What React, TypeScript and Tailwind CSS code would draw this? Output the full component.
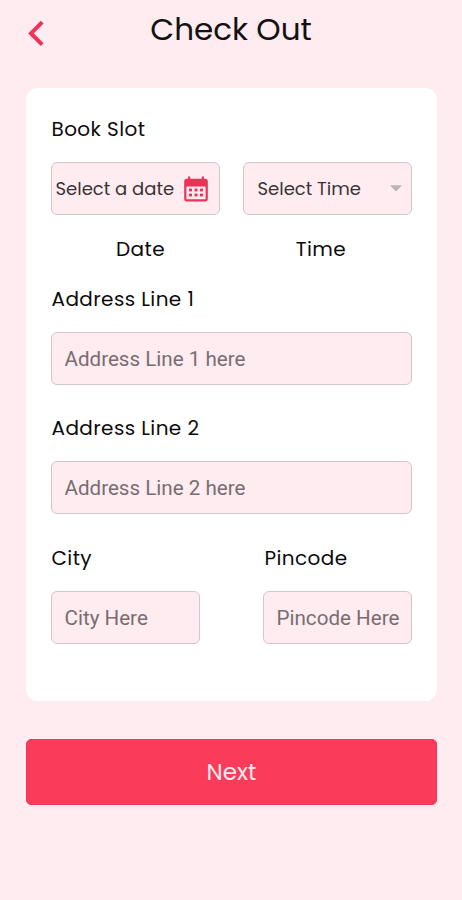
import type { ReactNode } from "react";
import { clsx } from "clsx";

function BackIcon() {
  return (
    <svg width="18" height="27" viewBox="0 0 18 27" fill="none" aria-hidden>
      <path d="M15.2 2.2 4 13.4 15.2 24.6" stroke="#f0325a" strokeWidth="4" />
    </svg>
  );
}

function CalendarIcon() {
  return (
    <svg width="24" height="26" viewBox="0 0 24 26" aria-hidden className="shrink-0">
      <path
        fill="#ee3157"
        fillRule="evenodd"
        d="M4 .5h2.2v2.3h11.6V.5H20v2.3h1.2a2.6 2.6 0 0 1 2.6 2.6v17.4a2.6 2.6 0 0 1-2.6 2.6H2.8a2.6 2.6 0 0 1-2.6-2.6V5.4a2.6 2.6 0 0 1 2.6-2.6H4zM2.4 10.5v12.7h19.2V10.5z"
      />
      <g fill="#ee3157">
        <rect x="5" y="12.6" width="3" height="2.8" />
        <rect x="10.5" y="12.6" width="3" height="2.8" />
        <rect x="16" y="12.6" width="3" height="2.8" />
        <rect x="5" y="17.6" width="3" height="2.8" />
        <rect x="10.5" y="17.6" width="3" height="2.8" />
        <rect x="16" y="17.6" width="3" height="2.8" />
      </g>
    </svg>
  );
}

function Label({ children, className }: { children: ReactNode; className?: string }) {
  return (
    <span
      className={clsx(
        "block h-6 whitespace-nowrap text-[20px] leading-6 tracking-[0.4px] text-[#0c0b0c]",
        className,
      )}
    >
      {children}
    </span>
  );
}

function TextField({
  label,
  placeholder,
  labelClass = "pl-px",
}: {
  label: string;
  placeholder: string;
  labelClass?: string;
}) {
  return (
    <label className="block">
      <Label className={labelClass}>{label}</Label>
      <input
        type="text"
        placeholder={placeholder}
        className="mt-[21px] block h-[53px] w-full rounded-md border border-[#d3c6cb] bg-[#feecf0] pl-[13px] font-[Roboto,sans-serif] text-[20.6px] outline-none placeholder:text-[#796d71]"
      />
    </label>
  );
}

export default function App() {
  return (
    <main className="flex h-[900px] w-[462px] flex-col bg-[#feecf0] font-[Poppins,Inter,sans-serif]">
      <header className="grid h-[88px] grid-cols-[44px_1fr_44px] items-start px-[1px]">
        <button type="button" aria-label="Back" className="mt-[20px] ml-[26px]">
          <BackIcon />
        </button>
        <h1 className="mt-[11px] text-center text-[31px] leading-9 text-[#131112]">Check Out</h1>
      </header>

      <section className="mx-auto h-[613px] w-[411px] rounded-xl bg-white px-[25px] pt-[29px]">
        <Label className="pl-px">Book Slot</Label>
        <div className="mt-[21px] grid grid-cols-2 gap-[23px]">
          <div>
            <button
              type="button"
              className="flex h-[53px] w-full items-center justify-between rounded-md border border-[#d3c6cb] bg-[#feecf0] pr-[11px] pl-1 text-[18px] whitespace-nowrap text-[#393335]"
            >
              Select a date
              <CalendarIcon />
            </button>
            <Label className="mt-[22px] pl-[11px] text-center">Date</Label>
          </div>
          <div>
            <button
              type="button"
              className="flex h-[53px] w-full items-center justify-between rounded-md border border-[#d3c6cb] bg-[#feecf0] pr-[9px] pl-[14px] text-[18px] whitespace-nowrap text-[#393335]"
            >
              Select Time
              <svg width="12" height="7" viewBox="0 0 12 7" aria-hidden>
                <path d="M0 .3h12L6 6.5z" fill="#bdb2b6" />
              </svg>
            </button>
            <Label className="mt-[22px] pr-[12px] text-center">Time</Label>
          </div>
        </div>

        <div className="mt-[26px] flex flex-col gap-[31px]">
          <TextField label="Address Line 1" placeholder="Address Line 1 here" />
          <TextField label="Address Line 2" placeholder="Address Line 2 here" />
          <div className="mt-px flex justify-between">
            <div className="w-[149px]">
              <TextField label="City" placeholder="City Here" />
            </div>
            <div className="w-[149px]">
              <TextField label="Pincode" placeholder="Pincode Here" labelClass="pl-[2px]" />
            </div>
          </div>
        </div>
      </section>

      <button
        type="button"
        className="mx-auto mt-[38px] h-[66px] w-[411px] rounded-[5px] border border-[#f2345a] bg-[#fa3c5a] pl-px text-[23px] text-[#ffe9ee]"
      >
        Next
      </button>
    </main>
  );
}
